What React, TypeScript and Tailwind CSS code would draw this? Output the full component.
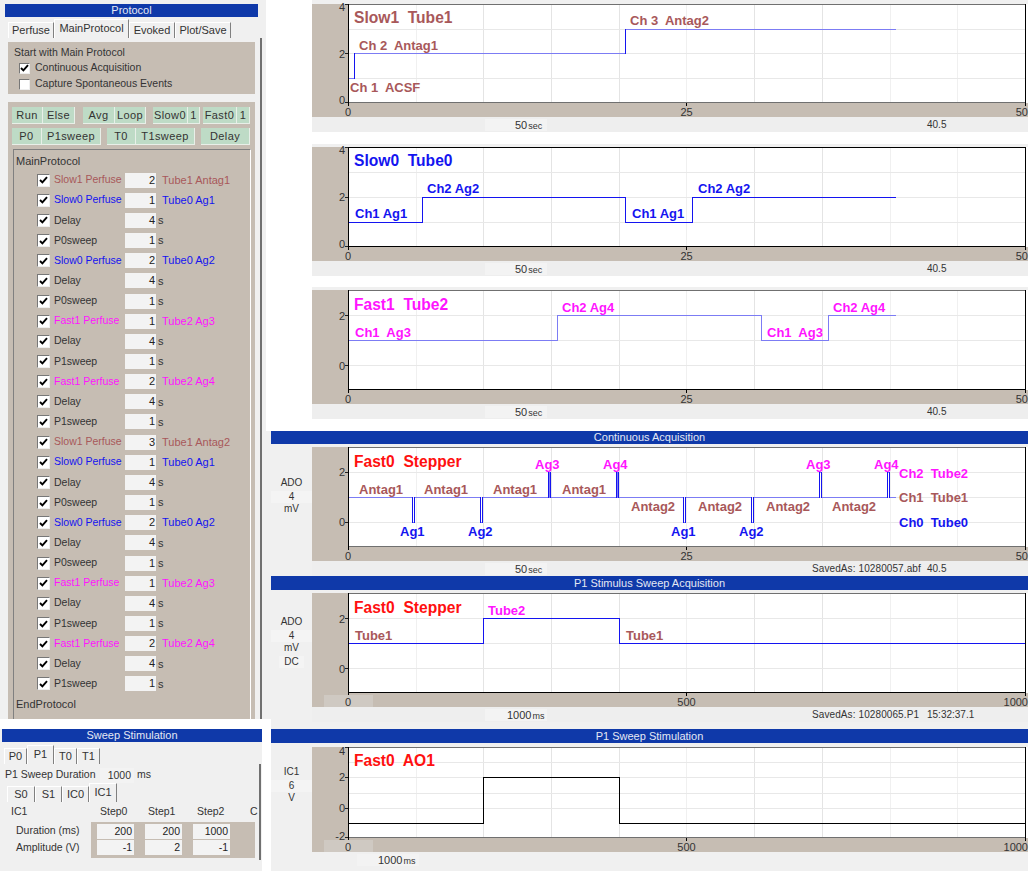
import React from "react";

const BROWN = "#a8585a";
const BLUE = "#1414f0";
const MAG = "#ff14ff";
const RED = "#ff1010";
const SOFT = "#7c7cf4";

type Label = { x: number; y: number; t: string; c: string; s?: number };
type ChartProps = {
  top: number;
  h: number;
  grid: number[];
  yTicks: [string, number, number][];
  topCol?: string;
  botCol?: string;
  line: string;
  lineCol: string;
  lineW?: number;
  verts?: string;
  labels: Label[];
  xLabels: [string, string, string];
  zeroBox?: boolean;
};

function Chart({ top, h, grid, yTicks, topCol = "#707070", botCol = "#707070", line, lineCol, lineW = 1, verts, labels, xLabels, zeroBox }: ChartProps) {
  const vx: [number, string][] = [
    [416.5, "#f0f0f0"], [483.5, "#e4e4e4"], [551.5, "#e4e4e4"], [619.5, "#e4e4e4"], [686.5, "#f0f0f0"],
    [754.5, "#e4e4e4"], [822.5, "#e4e4e4"], [890.5, "#f0f0f0"], [957.5, "#f0f0f0"],
  ];
  const bottom = top + h;
  return (
    <div className="flex flex-col w-[716px] bg-[#c6bdb3]">
      <div className="flex">
        <div className="w-[36px] shrink-0" />
        <div className="w-[680px] bg-white">
          <svg width={677} height={h} viewBox={`348 ${top} 677 ${h}`} className="block overflow-visible">
            {vx.map(([x, col], i) => (
              <line key={i} x1={x} x2={x} y1={top} y2={bottom} stroke={col} />
            ))}
            {grid.map((y, i) => (
              <line key={i} x1={348} x2={1025} y1={y + 0.5} y2={y + 0.5} stroke="#e8e8e8" />
            ))}
            <path d={line} fill="none" stroke={lineCol} strokeWidth={lineW} shapeRendering="crispEdges" />
            {verts && <path d={verts} fill="none" stroke={BLUE} strokeWidth={1} shapeRendering="crispEdges" />}
            <line x1={348} x2={1025.5} y1={top + 0.5} y2={top + 0.5} stroke={topCol} />
            <line x1={348} x2={1025.5} y1={bottom - 0.5} y2={bottom - 0.5} stroke={botCol} />
            <line x1={348.5} x2={348.5} y1={top} y2={bottom + 3} stroke="#000" />
            <line x1={1025.5} x2={1025.5} y1={top} y2={bottom + 3} stroke="#000" />
            <line x1={686.5} x2={686.5} y1={bottom} y2={bottom + 3} stroke="#000" />
            {yTicks.map(([t, y, ly]) => (
              <g key={t}>
                <line x1={345} x2={348} y1={y + 0.5} y2={y + 0.5} stroke="#222" />
                <text x={345} y={ly + 4} textAnchor="end" fontSize={11} fill="#333">{t}</text>
              </g>
            ))}
            {zeroBox && <rect x={324} y={bottom + 2} width={49} height={12} fill="#cfc9c2" />}
            <text x={348} y={bottom + 13} textAnchor="middle" fontSize={11} fill="#333">{xLabels[0]}</text>
            <text x={686.5} y={bottom + 13} textAnchor="middle" fontSize={11} fill="#333">{xLabels[1]}</text>
            <text x={1028} y={bottom + 13} textAnchor="end" fontSize={11} fill="#333">{xLabels[2]}</text>
            {labels.map((l, i) => (
              <text key={i} x={l.x} y={l.y + (l.s ?? 13) * 0.36} fontSize={l.s ?? 13} fontWeight={700} fill={l.c} className="whitespace-pre">{l.t}</text>
            ))}
          </svg>
        </div>
      </div>
      <div className="h-[14px]" />
    </div>
  );
}

function Unit({ n, u, pl }: { n: string; u: string; pl: string }) {
  return (
    <span className={`inline-flex items-baseline w-[62px] h-[12px] leading-[12px] bg-[#f3f3f3] ${pl}`}>
      <span className="text-[11px]">{n}</span>
      <span className="text-[9px] ml-[1px]">{u}</span>
    </span>
  );
}

function Caption({ mid, right, n = "50", u = "sec", pl = "pl-[30px]" }: { mid?: string; right?: string; n?: string; u?: string; pl?: string }) {
  return (
    <div className="flex items-center w-[716px] h-[15px] bg-[#eeeeee] text-[10px] text-[#333]">
      <div className="w-[173px] shrink-0" />
      <div className="w-[327px] shrink-0 flex">
        <Unit n={n} u={u} pl={pl} />
      </div>
      <div className="w-[115px] shrink-0 whitespace-nowrap tracking-[0.1px]">{mid}</div>
      <div className="whitespace-nowrap">{right}</div>
    </div>
  );
}

function Title({ t, cls }: { t: string; cls: string }) {
  return <div className={`bg-[#0f39a9] text-[#e4e8f4] text-[11px] leading-none flex items-center justify-center ${cls}`}>{t}</div>;
}

function Tab({ t, w, active }: { t: string; w: string; active?: boolean }) {
  return (
    <div className={`flex items-center justify-center border-l border-t border-white border-r border-r-[#808080] text-[11px] text-[#333] bg-[#f0f0f0] ${w} ${active ? "h-[19px] pb-[2px]" : "h-[16px]"}`}>
      {t}
    </div>
  );
}

function Btn({ t, w }: { t: string; w: string }) {
  return (
    <div className={`h-[17px] bg-[#bedbc6] border-r border-b border-r-[#e8efe8] border-b-[#e8efe8] flex items-center justify-center text-[11px] text-[#333] tracking-[0.4px] ${w}`}>
      {t}
    </div>
  );
}

function Check({ on, size = "w-[13px] h-[13px]" }: { on: boolean; size?: string }) {
  return (
    <div className={`bg-white border-t border-l border-[#777] border-r border-b border-r-[#eee] border-b-[#eee] shrink-0 flex items-center justify-center ${size}`}>
      {on && (
        <svg width="9" height="8" viewBox="0 0 9 8">
          <path d="M1 4 L3.4 6.4 L8 1.2" fill="none" stroke="#000" strokeWidth="1.9" />
        </svg>
      )}
    </div>
  );
}

const rowsData: [string, string, string, string][] = [
  ["Slow1 Perfuse", "2", "Tube1 Antag1", BROWN],
  ["Slow0 Perfuse", "1", "Tube0 Ag1", BLUE],
  ["Delay", "4", "s", ""],
  ["P0sweep", "1", "s", ""],
  ["Slow0 Perfuse", "2", "Tube0 Ag2", BLUE],
  ["Delay", "4", "s", ""],
  ["P0sweep", "1", "s", ""],
  ["Fast1 Perfuse", "1", "Tube2 Ag3", MAG],
  ["Delay", "4", "s", ""],
  ["P1sweep", "1", "s", ""],
  ["Fast1 Perfuse", "2", "Tube2 Ag4", MAG],
  ["Delay", "4", "s", ""],
  ["P1sweep", "1", "s", ""],
  ["Slow1 Perfuse", "3", "Tube1 Antag2", BROWN],
  ["Slow0 Perfuse", "1", "Tube0 Ag1", BLUE],
  ["Delay", "4", "s", ""],
  ["P0sweep", "1", "s", ""],
  ["Slow0 Perfuse", "2", "Tube0 Ag2", BLUE],
  ["Delay", "4", "s", ""],
  ["P0sweep", "1", "s", ""],
  ["Fast1 Perfuse", "1", "Tube2 Ag3", MAG],
  ["Delay", "4", "s", ""],
  ["P1sweep", "1", "s", ""],
  ["Fast1 Perfuse", "2", "Tube2 Ag4", MAG],
  ["Delay", "4", "s", ""],
  ["P1sweep", "1", "s", ""],
];

function ProtocolPanel() {
  return (
    <div className="h-[719px] w-[266px] bg-[#f0f0f0] overflow-hidden flex flex-col pt-[4px]">
      <Title t="Protocol" cls="ml-[5px] w-[253px] h-[13px]" />
      <div className="flex items-end ml-[8px] h-[21px] w-[247px]">
        <Tab t="Perfuse" w="w-[46px]" />
        <Tab t="MainProtocol" w="w-[75px]" active />
        <Tab t="Evoked" w="w-[46px]" />
        <Tab t="Plot/Save" w="w-[56px]" />
      </div>
      <div className="ml-[8px] w-[254px] flex-1 min-h-0 border-r-2 border-[#707070] flex flex-col">
        <div className="mt-[4px] w-[247px] h-[52px] bg-[#c6bdb3] text-[10.5px] text-[#333] pl-[6px] pt-[3px] flex flex-col">
          <div className="h-[14px] leading-[14px]">Start with Main Protocol</div>
          <div className="flex items-center gap-[5px] ml-[5px] mt-[1px] h-[16px]">
            <Check on size="w-[11px] h-[11px]" />
            <span>Continuous Acquisition</span>
          </div>
          <div className="flex items-center gap-[5px] ml-[5px] h-[16px]">
            <Check on={false} size="w-[11px] h-[11px]" />
            <span>Capture Spontaneous Events</span>
          </div>
        </div>
        <div className="mt-[8px] w-[247px] flex-1 min-h-0 bg-[#c6bdb3] pt-[5px] pl-[4px] flex flex-col">
          <div className="flex h-[17px]">
            <Btn t="Run" w="w-[31px]" />
            <Btn t="Else" w="w-[32px]" />
            <div className="w-[8px]" />
            <Btn t="Avg" w="w-[32px]" />
            <Btn t="Loop" w="w-[31px]" />
            <div className="w-[7px]" />
            <Btn t="Slow0" w="w-[35px]" />
            <Btn t="1" w="w-[12px]" />
            <div className="w-[3px]" />
            <Btn t="Fast0" w="w-[34px]" />
            <Btn t="1" w="w-[13px]" />
          </div>
          <div className="flex h-[17px] mt-[4px]">
            <Btn t="P0" w="w-[30px]" />
            <Btn t="P1sweep" w="w-[59px]" />
            <div className="w-[6px]" />
            <Btn t="T0" w="w-[29px]" />
            <Btn t="T1sweep" w="w-[59px]" />
            <div className="w-[6px]" />
            <Btn t="Delay" w="w-[49px]" />
          </div>
          <div className="mt-[4px] ml-[1px] w-[238px] flex-1 border-t border-l border-[#808080] border-r border-r-white pl-[2px] pt-[4px] text-[11px] text-[#333] flex flex-col">
            <div className="h-[15px] leading-[15px]">MainProtocol</div>
            <div className="flex flex-col mt-[1px]">
              {rowsData.map(([a, n, b, c], i) => (
                <div key={i} className="flex items-center h-[20.16px] pl-[21px]">
                  <Check on />
                  <span className="w-[70px] ml-[4px] mr-[1px] text-[10.5px] whitespace-nowrap" style={c ? { color: c } : undefined}>{a}</span>
                  <span className="w-[31px] h-[15px] bg-[#f3f3f3] text-right pr-[1px] leading-[15px] text-[#222]">{n}</span>
                  <span className={c ? "ml-[6px] whitespace-nowrap" : "ml-[2px]"} style={c ? { color: c } : undefined}>{b}</span>
                </div>
              ))}
            </div>
            <div className="mt-[3px] h-[15px] leading-[15px]">EndProtocol</div>
          </div>
        </div>
      </div>
    </div>
  );
}

function NumBox({ t }: { t: string }) {
  return <div className="w-[37px] h-[15px] bg-[#f3f3f3] text-right pr-[2px] leading-[15px] text-[#222]">{t}</div>;
}

function SweepPanel() {
  return (
    <div className="mt-[10px] w-[262px] h-[142px] bg-[#f0f0f0] flex flex-col overflow-hidden text-[10.5px] text-[#333]">
      <Title t="Sweep Stimulation" cls="ml-[2px] w-[260px] h-[13px]" />
      <div className="flex items-end ml-[4px] h-[22px]">
        <Tab t="P0" w="w-[23px]" />
        <Tab t="P1" w="w-[27px]" active />
        <Tab t="T0" w="w-[23px]" />
        <Tab t="T1" w="w-[23px]" />
      </div>
      <div className="ml-[5px] w-[256px] h-[96px] border-r-2 border-[#707070]">
        <div className="flex items-center h-[20px] mt-[1px]">
          <span className="w-[93px] whitespace-nowrap">P1 Sweep Duration</span>
          <span className="w-[34px] ml-[2px] h-[15px] leading-[15px] bg-[#f3f3f3] text-right pr-[3px]">1000</span>
          <span className="ml-[3px]">ms</span>
        </div>
        <div className="flex items-end ml-[2px] h-[17px]">
          <Tab t="S0" w="w-[28px]" />
          <Tab t="S1" w="w-[27px]" />
          <Tab t="IC0" w="w-[27px]" />
          <Tab t="IC1" w="w-[28px]" active />
        </div>
        <div className="flex items-center h-[20px] pl-[6px]">
          <span className="w-[89px]">IC1</span>
          <span className="w-[48px]">Step0</span>
          <span className="w-[49px]">Step1</span>
          <span className="w-[53px]">Step2</span>
          <span>C</span>
        </div>
        <div className="flex">
          <div className="w-[86px] flex flex-col pl-[11px]">
            <div className="h-[16px] leading-[16px] whitespace-nowrap">Duration (ms)</div>
            <div className="h-[16px] leading-[16px] whitespace-nowrap mt-[1px]">Amplitude (V)</div>
          </div>
          <div className="w-[164px] h-[36px] bg-[#c6bdb3] pl-[6px] pt-[2px] flex flex-col gap-[1px]">
            <div className="flex gap-[11px]"><NumBox t="200" /><NumBox t="200" /><NumBox t="1000" /></div>
            <div className="flex gap-[11px]"><NumBox t="-1" /><NumBox t="2" /><NumBox t="-1" /></div>
          </div>
        </div>
      </div>
    </div>
  );
}

function Gutter({ lines, pt }: { lines: [string, string][]; pt: string }) {
  return (
    <div className={`w-[41px] shrink-0 flex flex-col items-center text-[10px] text-[#333] ${pt}`}>
      {lines.map(([t, cls], i) => (
        <div key={i} className={`text-center leading-[12px] ${cls}`}>{t}</div>
      ))}
    </div>
  );
}

const chart4Line = "M348 497.5 H412 V522.5 H414.5 V497.5 H480 V522.5 H482.5 V497.5 H548 V472.5 H549.5 V497.5 H616 V472.5 H617.5 V497.5 H683 V522.5 H685.5 V497.5 H751 V522.5 H753.5 V497.5 H819.5 V472.5 H821 V497.5 H887.5 V472.5 H889 V497.5 H896";
const chart4Verts = "M412 497 V523 M414.5 497 V523 M480 497 V523 M482.5 497 V523 M548 472 V498 M550 472 V498 M616 472 V498 M618 472 V498 M683 497 V523 M685.5 497 V523 M751 497 V523 M753.5 497 V523 M819.5 472 V498 M821.5 472 V498 M887.5 472 V498 M889.5 472 V498";

export default function App() {
  return (
    <div className="flex w-[1032px] h-[871px] bg-white overflow-hidden font-['Liberation_Sans',Arial,sans-serif]">
      <div className="w-[271px] shrink-0 flex flex-col">
        <div className="flex h-[719px]">
          <ProtocolPanel />
          <div className="w-[5px] flex flex-col">
            <div className="h-[431px]" />
            <div className="flex-1 bg-[#f0f0f0]" />
          </div>
        </div>
        <SweepPanel />
      </div>
      <div className="w-[757px] shrink-0 flex flex-col">
        <div className="ml-[41px] w-[716px]">
          <div className="h-[4px] bg-[#f0f0f0]" />
          <Chart
            top={4} h={99} grid={[29, 53, 78]} yTicks={[["4", 4, 7], ["2", 53, 54], ["0", 102, 100]]}
            line="M348 78.5 H354.5 V53.5 H625.5 V29.5 H896" lineCol={SOFT}
            verts="M354.5 53 V79 M625.5 29 V54"
            labels={[
              { x: 354, y: 17, t: "Slow1  Tube1", c: BROWN, s: 15.6 },
              { x: 359, y: 45, t: "Ch 2  Antag1", c: BROWN },
              { x: 350, y: 87, t: "Ch 1  ACSF", c: BROWN },
              { x: 630, y: 20, t: "Ch 3  Antag2", c: BROWN },
            ]}
            xLabels={["0", "25", "50"]}
          />
          <Caption right="40.5" />
          <div className="h-[12px]" />
          <div className="h-[3px] bg-[#f0f0f0]" />
          <Chart
            top={147} h={100} grid={[172, 197, 222]} yTicks={[["4", 147, 150], ["2", 197, 197], ["0", 246, 244]]} topCol="#000" botCol="#000"
            line="M348 222.5 H422.5 V197.5 H625.5 V222.5 H692.5 V197.5 H896" lineCol="#1414f0"
            labels={[
              { x: 354, y: 160, t: "Slow0  Tube0", c: BLUE, s: 15.6 },
              { x: 427, y: 188, t: "Ch2 Ag2", c: BLUE },
              { x: 355, y: 213, t: "Ch1 Ag1", c: BLUE },
              { x: 632, y: 213, t: "Ch1 Ag1", c: BLUE },
              { x: 698, y: 188, t: "Ch2 Ag2", c: BLUE },
            ]}
            xLabels={["0", "25", "50"]}
          />
          <Caption right="40.5" />
          <div className="h-[11px]" />
          <div className="h-[3px] bg-[#f0f0f0]" />
          <Chart
            top={290} h={100} grid={[315, 340, 365]} yTicks={[["2", 315, 316], ["0", 365, 366]]} botCol="#000"
            line="M348 340.5 H557.5 V315.5 H761.5 V340.5 H828.5 V315.5 H896" lineCol={SOFT}
            labels={[
              { x: 354, y: 304, t: "Fast1  Tube2", c: MAG, s: 15.6 },
              { x: 355, y: 332, t: "Ch1  Ag3", c: MAG },
              { x: 562, y: 307, t: "Ch2 Ag4", c: MAG },
              { x: 767, y: 332, t: "Ch1  Ag3", c: MAG },
              { x: 833, y: 307, t: "Ch2 Ag4", c: MAG },
            ]}
            xLabels={["0", "25", "50"]}
          />
          <Caption right="40.5" />
          <div className="h-[12px]" />
        </div>

        <div className="flex-1 bg-[#f0f0f0] flex flex-col">
          <Title t="Continuous Acquisition" cls="h-[13px]" />
          <div className="flex mt-[3px]">
            <Gutter pt="pt-[30px]" lines={[["ADO", "w-full"], ["4", "w-full mt-[2px] bg-[#f4f4f4]"], ["mV", "w-full"]]} />
            <div className="flex flex-col">
              <Chart
                top={447} h={100} grid={[472, 497, 522]} yTicks={[["2", 472, 472], ["0", 522, 522]]}
                line={chart4Line} lineCol={SOFT} verts={chart4Verts}
                labels={[
                  { x: 354, y: 461, t: "Fast0  Stepper", c: RED, s: 15.6 },
                  { x: 359, y: 489, t: "Antag1", c: BROWN },
                  { x: 424, y: 489, t: "Antag1", c: BROWN },
                  { x: 493, y: 489, t: "Antag1", c: BROWN },
                  { x: 562, y: 489, t: "Antag1", c: BROWN },
                  { x: 631, y: 506, t: "Antag2", c: BROWN },
                  { x: 698, y: 506, t: "Antag2", c: BROWN },
                  { x: 766, y: 506, t: "Antag2", c: BROWN },
                  { x: 832, y: 506, t: "Antag2", c: BROWN },
                  { x: 400, y: 531, t: "Ag1", c: BLUE },
                  { x: 468, y: 531, t: "Ag2", c: BLUE },
                  { x: 671, y: 531, t: "Ag1", c: BLUE },
                  { x: 739, y: 531, t: "Ag2", c: BLUE },
                  { x: 535, y: 464, t: "Ag3", c: MAG },
                  { x: 603, y: 464, t: "Ag4", c: MAG },
                  { x: 806, y: 464, t: "Ag3", c: MAG },
                  { x: 874, y: 464, t: "Ag4", c: MAG },
                  { x: 899, y: 473, t: "Ch2  Tube2", c: MAG },
                  { x: 899, y: 497, t: "Ch1  Tube1", c: BROWN },
                  { x: 899, y: 522, t: "Ch0  Tube0", c: BLUE },
                ]}
                xLabels={["0", "25", "50"]}
              />
              <Caption mid="SavedAs: 10280057.abf" right="40.5" />
            </div>
          </div>
          <Title t="P1 Stimulus Sweep Acquisition" cls="h-[14px]" />
          <div className="flex mt-[3px]">
            <Gutter pt="pt-[23px]" lines={[["ADO", "w-full"], ["4", "w-full mt-[2px] bg-[#f4f4f4]"], ["mV", "w-full"], ["DC", "w-[25px] mt-[2px] bg-[#f4f4f4]"]]} />
            <div className="flex flex-col">
              <Chart
                top={593} h={100} grid={[618, 643, 668]} yTicks={[["2", 618, 619], ["0", 668, 669]]} botCol="#000"
                line="M348 643.5 H483.5 V618.5 H619.5 V643.5 H1025" lineCol="#1414f0"
                zeroBox
                labels={[
                  { x: 354, y: 607, t: "Fast0  Stepper", c: RED, s: 15.6 },
                  { x: 488, y: 610, t: "Tube2", c: MAG },
                  { x: 355, y: 635, t: "Tube1", c: BROWN },
                  { x: 626, y: 635, t: "Tube1", c: BROWN },
                ]}
                xLabels={["0", "500", "1000"]}
              />
              <Caption n="1000" u="ms" pl="pl-[22px]" mid="SavedAs: 10280065.P1" right="15:32:37.1" />
            </div>
          </div>
          <div className="h-[7px]" />
          <Title t="P1 Sweep Stimulation" cls="h-[14px]" />
          <div className="flex mt-[4px]">
            <Gutter pt="pt-[19px]" lines={[["IC1", "w-full"], ["6", "w-full mt-[2px] bg-[#f4f4f4]"], ["V", "w-full"]]} />
            <div className="flex flex-col">
              <Chart
                top={746} h={91} grid={[761, 776, 792, 807]} yTicks={[["4", 746, 750], ["2", 776, 776], ["0", 807, 807], ["-2", 836, 835]]}
                line="M348 822.5 H483.5 V776.5 H619.5 V822.5 H1025" lineCol="#000"
                zeroBox
                labels={[{ x: 354, y: 759, t: "Fast0  AO1", c: RED, s: 15.6 }]}
                xLabels={["0", "500", "1000"]}
              />
              <div className="flex items-center h-[15px] text-[#333] pl-[45px]">
                <Unit n="1000" u="ms" pl="pl-[21px]" />
              </div>
            </div>
          </div>
        </div>
      </div>
    </div>
  );
}
